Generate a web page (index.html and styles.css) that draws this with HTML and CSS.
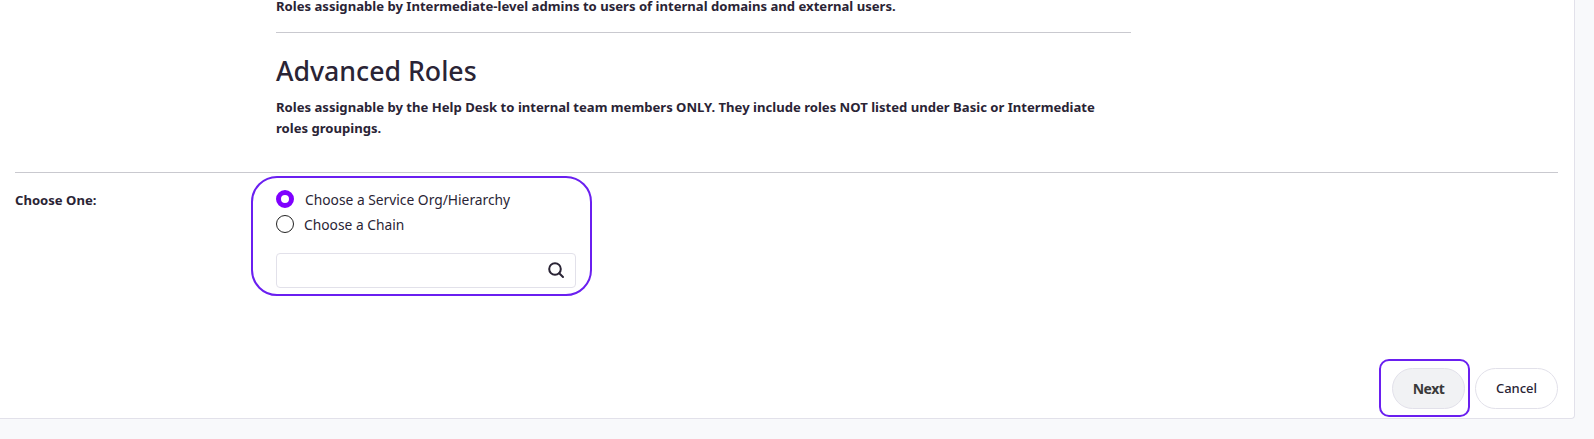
FILE: index.html
```html
<!DOCTYPE html>
<html lang="en">

<head>
    <meta charset="UTF-8">
    <meta name="viewport" content="width=device-width, initial-scale=1.0">
    <link rel="stylesheet" href="styles.css">
    <title>Choose One</title>
</head>

<body>
    <div class="card">
        <div class="roles">
            <p class="desc first">Roles assignable by Intermediate-level admins to users of internal domains and external users.</p>
            <hr class="line">
            <h2>Advanced Roles</h2>
            <p class="desc wrap">Roles assignable by the Help Desk to internal team members ONLY. They include roles NOT listed under Basic or Intermediate roles groupings.</p>
        </div>
        <hr class="line full">
        <div class="form-row">
            <div class="label">Choose One:</div>
            <div class="highlight">
                <label class="radio"><span class="dot on"></span><span class="radio-text">Choose a Service Org/Hierarchy</span></label>
                <label class="radio second"><span class="dot"></span><span class="radio-text">Choose a Chain</span></label>
                <div class="search">
                    <svg width="18" height="18" viewBox="0 0 18 18" fill="none" stroke="#2a2435" stroke-width="2">
                        <circle cx="8" cy="8" r="5.8"></circle>
                        <path d="M12.2 12.2 L16 16" stroke-linecap="round"></path>
                    </svg>
                </div>
            </div>
        </div>
        <div class="actions">
            <div class="next-wrap"><button class="btn next">Next</button></div>
            <button class="btn">Cancel</button>
        </div>
    </div>
</body>

</html>
```

FILE: styles.css
```css
* {
    margin: 0;
    padding: 0;
    box-sizing: border-box;
}

body {
    background-color: #f8f9fb;
    font-family: "Noto Sans", "Open Sans", sans-serif;
    color: #2a2435;
    height: 439px;
    overflow: hidden;
}

.card {
    width: 1575px;
    height: 419px;
    background-color: #fff;
    border-right: 1px solid #e2e1ea;
    border-bottom: 1px solid #e2e1ea;
    border-bottom-right-radius: 4px;
    padding: 0 15px;
    display: flex;
    flex-direction: column;
}

.roles {
    width: 855px;
    margin-left: 261px;
}

.desc {
    font-size: 13.1px;
    font-weight: 700;
    line-height: 21.5px;
}

.wrap {
    width: 830px;
}

.first {
    line-height: 12px;
}

.line {
    border: 0;
    border-top: 1px solid #c9c9cf;
    margin-top: 20px;
}

h2 {
    font-size: 26.7px;
    font-weight: 500;
    line-height: 36px;
    margin-top: 19.5px;
    margin-bottom: 8px;
}

.full {
    width: 1543px;
    margin-top: 32px;
}

.form-row {
    display: flex;
    margin-top: 3px;
}

.label {
    width: 236px;
    font-size: 13.1px;
    font-weight: 700;
    line-height: 48px;
}

.highlight {
    width: 341px;
    height: 120px;
    border: 2px solid #6a1ff0;
    border-radius: 26px;
    padding: 9px 14px 0 23px;
}

.radio {
    display: flex;
    align-items: center;
    font-size: 13.8px;
    height: 25px;
}

.dot {
    width: 18px;
    height: 18px;
    border-radius: 50%;
    border: 1.5px solid #222;
    margin-right: 10px;
}

.dot.on {
    border: 5px solid #7f00ff;
    margin-right: 11px;
}

.search {
    width: 300px;
    height: 35px;
    border: 1px solid #e2e1ea;
    border-radius: 4px;
    margin-top: 16px;
    display: flex;
    align-items: center;
    justify-content: flex-end;
    padding-right: 10px;
}

.actions {
    display: flex;
    justify-content: flex-end;
    align-items: center;
    margin-top: auto;
    margin-bottom: 1px;
    gap: 5px;
    padding-right: 1px;
}

.next-wrap {
    border: 2px solid #6a1ff0;
    border-radius: 10px;
    height: 58px;
    width: 91px;
    padding-left: 11px;
    display: flex;
    align-items: center;
}

.btn {
    width: 83px;
    height: 41px;
    border: 1px solid #e2e1ea;
    border-radius: 21px;
    background-color: #fff;
    color: #2a2435;
    font-family: "Noto Sans", "Open Sans", sans-serif;
    font-size: 13px;
    font-weight: 500;
}

.next {
    width: 73px;
    background-color: #f1f2f4;
    color: #3a3a3a;
    font-size: 14px;
    font-weight: 700;
    letter-spacing: -0.5px;
}
```
